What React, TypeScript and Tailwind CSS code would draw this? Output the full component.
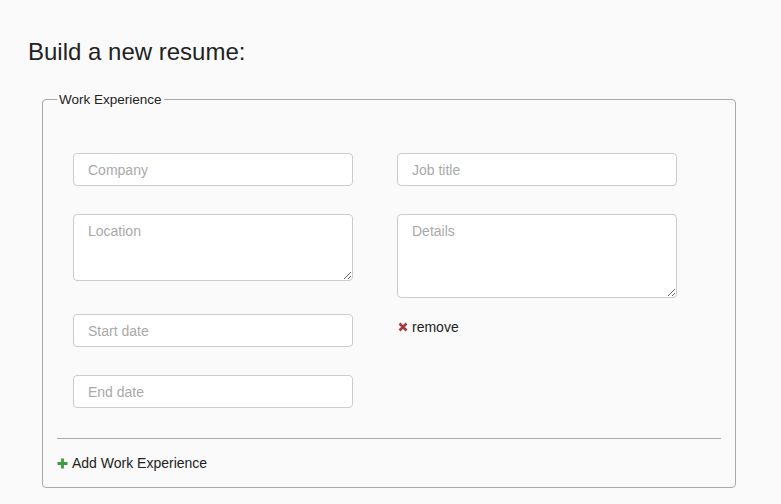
import React from "react";

const font = { fontFamily: '"Liberation Sans", Arial, Helvetica, sans-serif' };

function Input({ placeholder }: { placeholder: string }) {
  return (
    <input
      placeholder={placeholder}
      className="block w-[280px] h-[33px] rounded-[4px] border border-[#cccccc] bg-white px-[14px] text-[14px] text-[#333] placeholder:text-[#a9a9a9] outline-none"
      style={font}
    />
  );
}

function Area({ placeholder, h }: { placeholder: string; h: string }) {
  return (
    <textarea
      placeholder={placeholder}
      className={`block w-[280px] ${h} rounded-[4px] border border-[#cccccc] bg-white px-[14px] py-[6px] leading-[20px] text-[14px] text-[#333] placeholder:text-[#a9a9a9] outline-none`}
      style={font}
    />
  );
}

export default function App() {
  return (
    <div className="min-h-[504px] w-full bg-[#fafafa] text-[#222] overflow-hidden" style={font}>
      <h1 className="ml-[28px] pt-[38px] text-[24px] leading-[28px] font-normal text-[#222]">
        Build a new resume:
      </h1>
      <fieldset className="ml-[42px] mt-[26px] w-[694px] rounded-[4px] border border-[#a9a9a9] px-[14px] pb-[14px]">
        <legend className="px-[2px] text-[13.5px] leading-[15px] text-[#222]">Work Experience</legend>
        <div className="flex pl-[16px] pt-[46px]">
          <div className="flex flex-col">
            <Input placeholder="Company" />
            <div className="mt-[28px]">
              <Area placeholder="Location" h="h-[67px]" />
            </div>
            <div className="mt-[33px]">
              <Input placeholder="Start date" />
            </div>
            <div className="mt-[28px]">
              <Input placeholder="End date" />
            </div>
          </div>
          <div className="ml-[44px] flex flex-col">
            <Input placeholder="Job title" />
            <div className="mt-[28px]">
              <Area placeholder="Details" h="h-[84px]" />
            </div>
            <div className="mt-[19px] flex items-center h-[20px] text-[14px] text-[#222]">
              <svg width="10" height="10" viewBox="0 0 10 10" className="ml-[1px] mr-[4px]">
                <path d="M1.5 1.5 L8.5 8.5 M8.5 1.5 L1.5 8.5" stroke="#a23b3b" strokeWidth="2.6" strokeLinecap="butt" />
              </svg>
              <span>remove</span>
            </div>
          </div>
        </div>
        <div className="mt-[30px] h-px w-full bg-[#aaaaaa]" />
        <div className="mt-[14px] flex items-center h-[20px] text-[14px] text-[#222]">
          <svg width="11" height="11" viewBox="0 0 11 11" className="mr-[4px]">
            <path d="M5.5 0.5 V10.5 M0.5 5.5 H10.5" stroke="#3d9a3d" strokeWidth="2.8" />
          </svg>
          <span>Add Work Experience</span>
        </div>
      </fieldset>
    </div>
  );
}
